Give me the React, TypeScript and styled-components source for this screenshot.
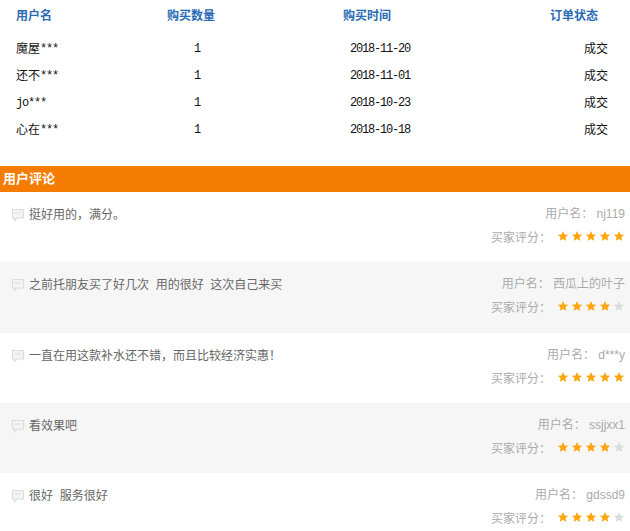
import React from "react";
import styled, { createGlobalStyle } from "styled-components";

const Global = createGlobalStyle`
  html, body { margin: 0; padding: 0; background: #fff; }
  body { width: 630px; height: 531px; overflow: hidden; font-family: "Liberation Sans", "Noto Sans CJK SC", sans-serif; font-size: 12px; }
`;

const Page = styled.div`
  width: 630px;
  height: 531px;
  overflow: hidden;
`;

const OrderGrid = styled.div`
  display: grid;
  grid-template-columns: 120px 141px 200px 169px;
  height: 166px;
  align-content: start;
  padding-top: 6px;
  box-sizing: border-box;
`;

const HeadCell = styled.div<{ $pad: number }>`
  height: 20px;
  line-height: 20px;
  margin-bottom: 10px;
  padding-left: ${(p) => p.$pad}px;
  font-weight: bold;
  color: #2a6ab5;
  font-size: 12px;
  white-space: nowrap;
`;

const Cell = styled.div<{ $pad: number }>`
  height: 27px;
  line-height: 27px;
  padding-left: ${(p) => p.$pad}px;
  color: #111;
  font-size: 12px;
  white-space: nowrap;
`;

const Mono = styled.span`
  font-family: "Liberation Mono", monospace;
  font-size: 12px;
  letter-spacing: -1.2px;
  vertical-align: 1px;
`;

const Banner = styled.div`
  height: 26px;
  line-height: 26px;
  background: #f57c03;
  color: #fff;
  font-weight: bold;
  font-size: 13px;
  padding-left: 3px;
`;

const Review = styled.div<{ $shade: boolean; $h: number }>`
  height: ${(p) => p.$h}px;
  box-sizing: border-box;
  background: ${(p) => (p.$shade ? "#f6f6f6" : "#fff")};
  display: flex;
  justify-content: space-between;
  padding: 11px 5px 0 11px;
`;

const Comment = styled.div`
  display: flex;
  align-items: flex-start;
  gap: 4px;
  color: #666;
  font-size: 12px;
  line-height: 22px;
  padding-top: 1px;
`;

const CommentText = styled.span`
  white-space: pre;
`;

const Bubble = styled.svg`
  width: 14px;
  height: 14px;
  margin-top: 4px;
  flex: none;
`;

const Meta = styled.div`
  display: flex;
  flex-direction: column;
  align-items: flex-end;
  color: #aaa;
  font-size: 12px;
  line-height: 22px;
`;

const ScoreRow = styled.div`
  display: flex;
  align-items: center;
  margin-top: 2px;
`;

const Stars = styled.div`
  display: flex;
  gap: 2px;
  margin-left: 6px;
  margin-bottom: 4px;
`;

const StarIcon = styled.svg<{ $on: boolean }>`
  width: 12px;
  height: 12px;
  fill: ${(p) => (p.$on ? "#fda50e" : "#dcdcdc")};
`;

const Label = styled.span`
  color: #aaa;
`;

const orders = [
  ["魔屋", "2018-11-20"],
  ["还不", "2018-11-01"],
  ["", "2018-10-23"],
  ["心在", "2018-10-18"],
];

const reviews = [
  { text: "挺好用的，满分。", user: "nj119", score: 5, h: 70 },
  { text: "之前托朋友买了好几次  用的很好  这次自己来买", user: "西瓜上的叶子", score: 4, h: 71 },
  { text: "一直在用这款补水还不错，而且比较经济实惠！", user: "d***y", score: 5, h: 70 },
  { text: "看效果吧", user: "ssjjxx1", score: 4, h: 70 },
  { text: "很好  服务很好", user: "gdssd9", score: 4, h: 70 },
];

const Star = ({ on }: { on: boolean }) => (
  <StarIcon $on={on} viewBox="0 0 24 24">
    <path d="M12 2l3 6.8 7.3.8-5.5 4.9 1.6 7.2L12 18.1l-6.4 3.6 1.6-7.2-5.5-4.9 7.3-.8z" />
  </StarIcon>
);

export default function App() {
  return (
    <Page>
      <Global />
      <OrderGrid>
        <HeadCell $pad={16}>用户名</HeadCell>
        <HeadCell $pad={47}>购买数量</HeadCell>
        <HeadCell $pad={82}>购买时间</HeadCell>
        <HeadCell $pad={89}>订单状态</HeadCell>
        {orders.map(([n, d]) => (
          <React.Fragment key={d}>
            <Cell $pad={16}>{n}<Mono>{n ? "***" : "jo***"}</Mono></Cell>
            <Cell $pad={74}><Mono>1</Mono></Cell>
            <Cell $pad={89}><Mono>{d}</Mono></Cell>
            <Cell $pad={123}>成交</Cell>
          </React.Fragment>
        ))}
      </OrderGrid>
      <Banner>用户评论</Banner>
      {reviews.map((r, i) => (
        <Review key={r.user} $shade={i % 2 === 1} $h={r.h}>
          <Comment>
            <Bubble viewBox="0 0 14 14">
              <path d="M1.5 1.5h11v8.5h-6.5l-2.5 2.5v-2.5h-2z" fill="#f4f4f4" stroke="#dcdcdc" strokeWidth="1.2" />
              <path d="M4 5h6" stroke="#dcdcdc" strokeWidth="1" />
            </Bubble>
            <CommentText>{r.text}</CommentText>
          </Comment>
          <Meta>
            <div>用户名： {r.user}</div>
            <ScoreRow>
              <Label>买家评分：</Label>
              <Stars>
                {[0, 1, 2, 3, 4].map((s) => (
                  <Star key={s} on={s < r.score} />
                ))}
              </Stars>
            </ScoreRow>
          </Meta>
        </Review>
      ))}
    </Page>
  );
}
